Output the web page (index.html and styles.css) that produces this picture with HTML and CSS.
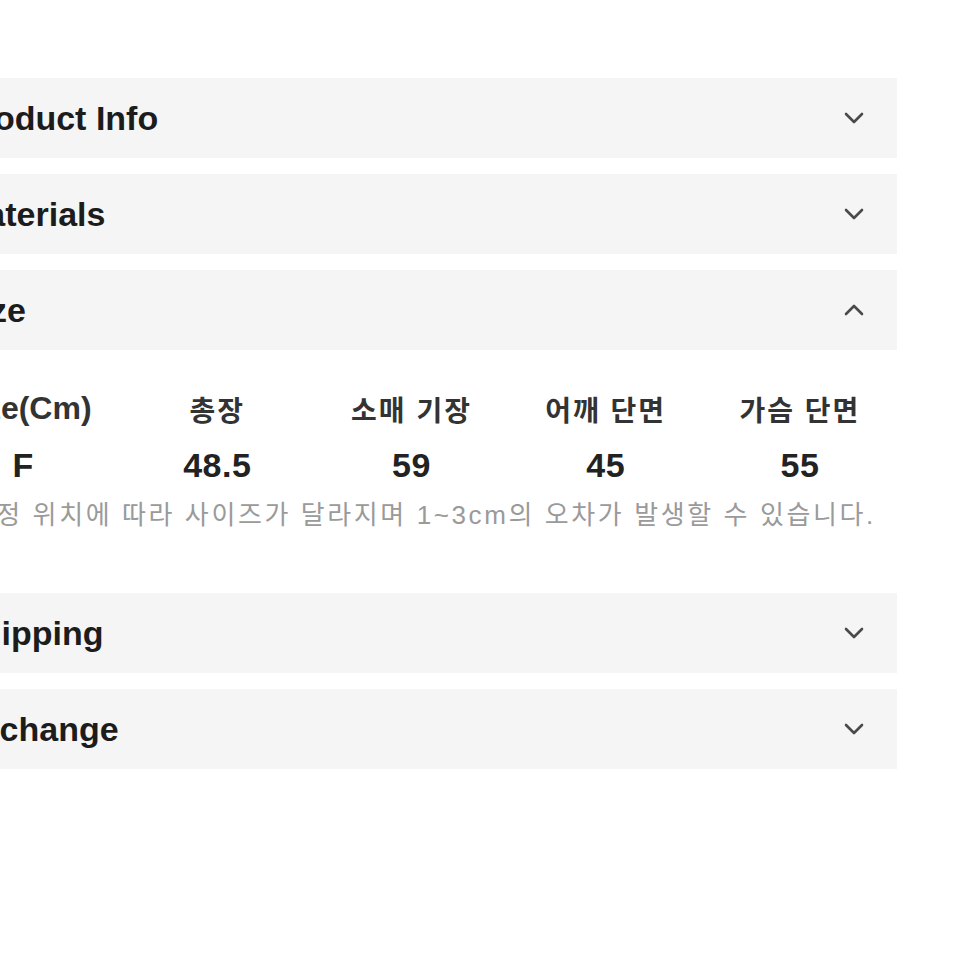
FILE: index.html
```html
<!DOCTYPE html>
<html lang="ko">
<head>
<meta charset="utf-8">
<title>Product details</title>
<link rel="stylesheet" href="styles.css">
</head>
<body>
<div class="accordion">
  <section class="item">
    <div class="head">
      <span class="title">Product Info</span>
      <svg class="chev" viewBox="0 0 20 12" width="20" height="12"><polyline points="2,2 10,10 18,2"/></svg>
    </div>
  </section>
  <section class="item">
    <div class="head">
      <span class="title">Materials</span>
      <svg class="chev" viewBox="0 0 20 12" width="20" height="12"><polyline points="2,2 10,10 18,2"/></svg>
    </div>
  </section>
  <section class="item open">
    <div class="head">
      <span class="title">Size</span>
      <svg class="chev" viewBox="0 0 20 12" width="20" height="12"><polyline points="2,10 10,2 18,10"/></svg>
    </div>
    <div class="panel">
      <div class="grid">
        <div class="th latin">Size(Cm)</div>
        <div class="th">총장</div>
        <div class="th">소매 기장</div>
        <div class="th">어깨 단면</div>
        <div class="th">가슴 단면</div>
        <div class="td">F</div>
        <div class="td">48.5</div>
        <div class="td">59</div>
        <div class="td">45</div>
        <div class="td">55</div>
      </div>
      <p class="note">* 측정 위치에 따라 사이즈가 달라지며 1~3cm의 오차가 발생할 수 있습니다.</p>
    </div>
  </section>
  <section class="item">
    <div class="head">
      <span class="title">Shipping</span>
      <svg class="chev" viewBox="0 0 20 12" width="20" height="12"><polyline points="2,2 10,10 18,2"/></svg>
    </div>
  </section>
  <section class="item">
    <div class="head">
      <span class="title">Exchange</span>
      <svg class="chev" viewBox="0 0 20 12" width="20" height="12"><polyline points="2,2 10,10 18,2"/></svg>
    </div>
  </section>
</div>
</body>
</html>
```
FILE: styles.css
```css
html, body {
  margin: 0;
  padding: 0;
  background: #ffffff;
  overflow: hidden;
}
body {
  font-family: "Liberation Sans", "Noto Sans CJK KR", sans-serif;
  color: #222;
}
.accordion {
  margin-left: -74px;
  width: 971px;
  padding-top: 78px;
}
.item {
  margin-bottom: 16px;
}
.head {
  height: 80px;
  background: #f5f5f5;
  display: flex;
  align-items: center;
  justify-content: space-between;
  padding: 0 33px 0 32px;
}
.title {
  font-size: 34px;
  font-weight: bold;
  color: #1c1c1c;
}
.chev {
  display: block;
  fill: none;
  stroke: #4a4a4a;
  stroke-width: 2.6;
  stroke-linecap: round;
  stroke-linejoin: round;
}
.panel {
  padding: 30px 0 41px;
}
.grid {
  display: grid;
  grid-template-columns: repeat(5, 1fr);
  grid-auto-rows: 57px;
  align-items: center;
  text-align: center;
}
.th {
  font-size: 28px;
  font-weight: bold;
  color: #333;
  letter-spacing: 2px;
}
.th.latin {
  font-size: 32px;
  letter-spacing: 0;
}
.td {
  font-size: 34px;
  font-weight: bold;
  color: #222;
  letter-spacing: 0.5px;
}
.note {
  margin: 0;
  height: 42px;
  line-height: 42px;
  text-align: center;
  font-size: 26px;
  color: #9a9a9a;
  letter-spacing: 2.6px;
  white-space: nowrap;
}
```
